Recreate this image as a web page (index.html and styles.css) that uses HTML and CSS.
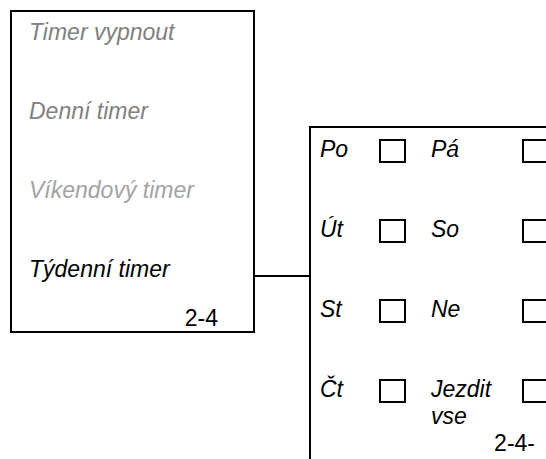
FILE: index.html
```html
<!DOCTYPE html>
<html lang="cs">
<head>
  <meta charset="UTF-8">
  <meta name="viewport" content="width=device-width, initial-scale=1.0">
  <title>Týdenní timer</title>
  <link rel="stylesheet" href="styles.css">
</head>
<body>
  <div class="screen">
    <div class="menu-box">
      <ul class="menu">
        <li class="menu-item off">Timer vypnout</li>
        <li class="menu-item off">Denní timer</li>
        <li class="menu-item dim">Víkendový timer</li>
        <li class="menu-item">Týdenní timer</li>
      </ul>
      <div class="page-no">2-4</div>
    </div>

    <div class="connector"></div>

    <div class="days-box">
      <div class="days">
        <span class="day">Po</span><span class="check"></span>
        <span class="day">Pá</span><span class="check"></span>

        <span class="day">Út</span><span class="check"></span>
        <span class="day">So</span><span class="check"></span>

        <span class="day">St</span><span class="check"></span>
        <span class="day">Ne</span><span class="check"></span>

        <span class="day">Čt</span><span class="check"></span>
        <span class="day wrap">Jezdit vse</span><span class="check"></span>
      </div>
      <div class="page-no sub">2-4-</div>
    </div>
  </div>
</body>
</html>
```

FILE: styles.css
```css
* {
  box-sizing: border-box;
}

body {
  margin: 0;
  overflow: hidden;
  background-color: #fff;
  font-family: "Liberation Sans", Arial, sans-serif;
  color: #000;
}

.screen {
  display: flex;
  align-items: flex-start;
  padding: 10px 0 0 10px;
  width: 600px;
}

/* caixa da esquerda */
.menu-box {
  width: 245px;
  height: 323px;
  border: 2px solid #000;
  padding: 7px 35px 0 17px;
  flex-shrink: 0;
}

.menu {
  list-style: none;
  margin: 0;
  padding: 0;
}

.menu-item {
  height: 79px;
  font-size: 23px;
  line-height: 27px;
  font-style: italic;
}

.menu-item.off {
  color: #808080;
}

.menu-item.dim {
  color: #a3a3a3;
}

.menu-item:last-child {
  height: 49px;
}

.page-no {
  text-align: right;
  font-size: 23px;
  line-height: 27px;
}

.connector {
  width: 54px;
  height: 2px;
  margin-top: 265px;
  background-color: #000;
  flex-shrink: 0;
}

/* caixa da direita */
.days-box {
  width: 260px;
  height: 360px;
  margin-top: 116px;
  border: 2px solid #000;
  border-right: none;
  padding: 8px 0 0 9px;
  flex-shrink: 0;
}

.days {
  display: grid;
  grid-template-columns: 59px 52px 91px 26px;
  grid-auto-rows: 80px;
  align-items: start;
}

.day {
  font-size: 23px;
  line-height: 27px;
  font-style: italic;
}

.day.wrap {
  width: 75px;
}

.check {
  width: 27px;
  height: 24px;
  margin-top: 3px;
  border: 2px solid #000;
}

.page-no.sub {
  width: 215px;
  margin-top: -26px;
}
```
